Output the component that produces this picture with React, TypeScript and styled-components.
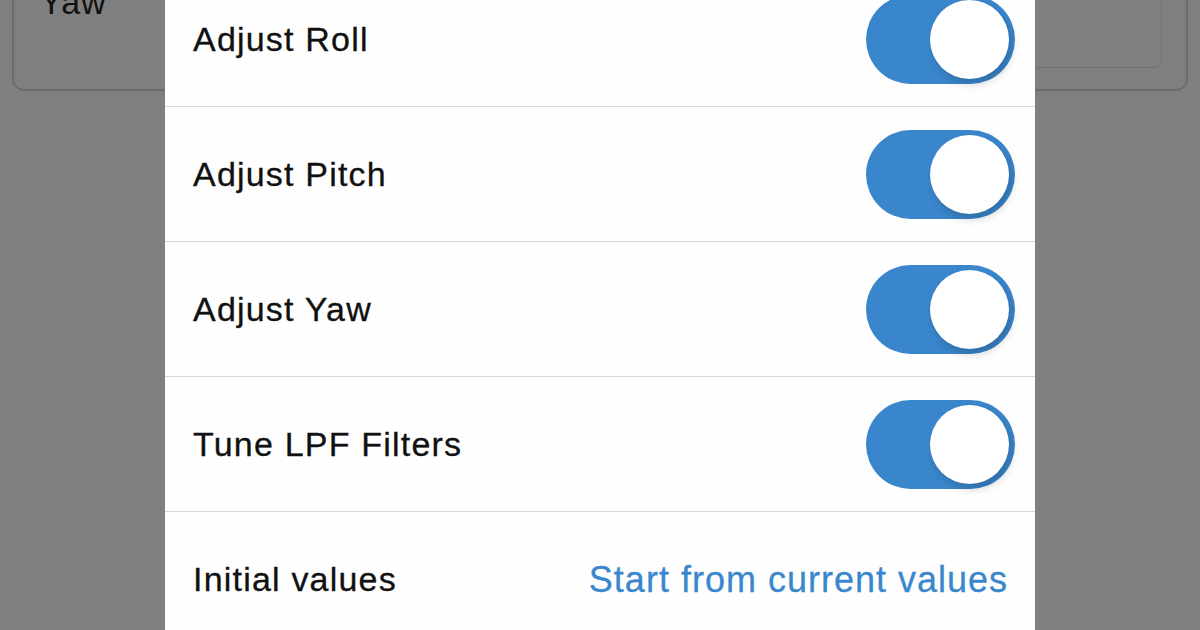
import styled, { createGlobalStyle } from 'styled-components';

const GlobalStyle = createGlobalStyle`
  html, body {
    margin: 0;
    padding: 0;
    background: #7f7f7f;
    font-family: "Liberation Sans", Arial, sans-serif;
    overflow: hidden;
  }
`;

type Setting = { label: string; enabled: boolean };

const toggles: Setting[] = [
  { label: 'Adjust Roll', enabled: true },
  { label: 'Adjust Pitch', enabled: true },
  { label: 'Adjust Yaw', enabled: true },
  { label: 'Tune LPF Filters', enabled: true },
];

export default function App() {
  return (
    <>
      <GlobalStyle />
      <Screen>
        <Card>
          <CardLabel>Yaw</CardLabel>
          <ValueBox />
        </Card>
        <Sheet>
          {toggles.map((t) => (
            <Row key={t.label}>
              <Label>{t.label}</Label>
              <Toggle $on={t.enabled}>
                <Knob />
              </Toggle>
            </Row>
          ))}
          <Row $last>
            <Label>Initial values</Label>
            <Link>Start from current values</Link>
          </Row>
        </Sheet>
      </Screen>
    </>
  );
}

const Screen = styled.div`
  position: relative;
  width: 1200px;
  height: 630px;
  background: #7f7f7f;
  overflow: hidden;
`;

const Card = styled.div`
  box-sizing: border-box;
  display: flex;
  justify-content: space-between;
  align-items: flex-end;
  margin: -60px 0 0 12px;
  width: 1176px;
  height: 151px;
  padding: 0 24px 21px 26px;
  border: 2px solid #6c6c6c;
  border-radius: 12px;
`;

const CardLabel = styled.span`
  align-self: flex-start;
  margin-top: 41px;
  font-size: 34px;
  letter-spacing: 1px;
  color: #111;
`;

const ValueBox = styled.div`
  width: 500px;
  height: 120px;
  border: 1.5px solid #727272;
  border-radius: 8px;
`;

const Sheet = styled.div`
  position: absolute;
  left: 165px;
  top: -28px;
  width: 870px;
  bottom: 0;
  background: #fefefe;
  display: flex;
  flex-direction: column;
`;

const Row = styled.div<{ $last?: boolean }>`
  box-sizing: border-box;
  display: flex;
  align-items: center;
  justify-content: space-between;
  height: 135px;
  flex-shrink: 0;
  padding: 0 20px 0 28px;
  border-bottom: ${(p) => (p.$last ? 'none' : '1.5px solid #d6d6d6')};
`;

const Label = styled.span`
  font-size: 34px;
  letter-spacing: 1.2px;
  color: #111;
  -webkit-text-stroke: 0.3px #111;
`;

const Link = styled.span`
  font-size: 36px;
  letter-spacing: 1px;
  color: #3b87cd;
  margin-right: 7px;
  -webkit-text-stroke: 0.3px #3b87cd;
`;

const Toggle = styled.div<{ $on: boolean }>`
  box-sizing: border-box;
  display: flex;
  align-items: center;
  justify-content: ${(p) => (p.$on ? 'flex-end' : 'flex-start')};
  width: 149px;
  height: 89px;
  padding: 0 6px;
  border-radius: 45px;
  background: ${(p) => (p.$on ? '#3a86cc' : '#e4e4e4')};
`;

const Knob = styled.div`
  width: 79px;
  height: 79px;
  border-radius: 50%;
  background: #fff;
  box-shadow: 3px 5px 8px rgba(0, 0, 0, 0.18);
`;
